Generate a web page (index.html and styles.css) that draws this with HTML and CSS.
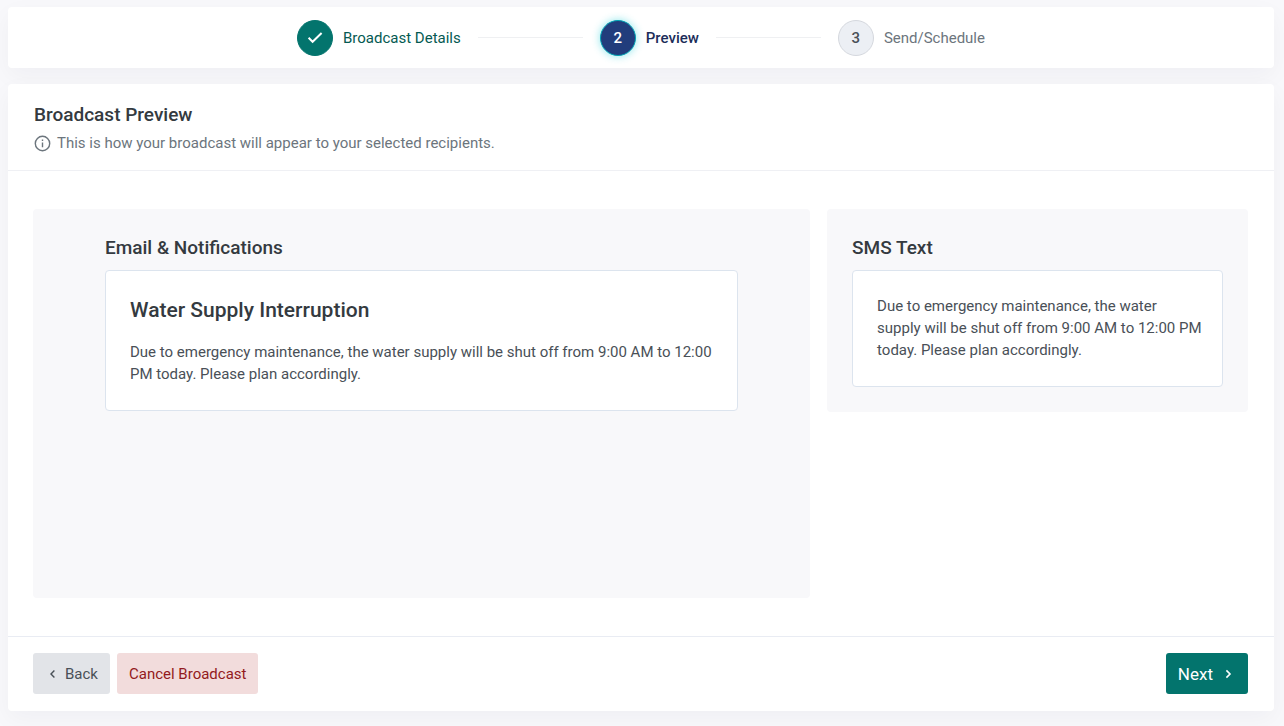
FILE: index.html
```html
<!DOCTYPE html>
<html lang="en">
<head>
    <meta charset="UTF-8">
    <meta name="viewport" content="width=device-width, initial-scale=1.0">
    <title>Broadcast Preview</title>
    <link rel="stylesheet" href="styles.css">
</head>
<body>
    <ol class="card stepper">
        <li class="step step-done">
            <span class="step-circle">
                <svg width="18" height="14" viewBox="0 0 18 14" fill="none" stroke="currentColor" stroke-width="2"><path d="M2.6 6.8l4 4L15.6 2"/></svg>
            </span>
            <span class="step-label">Broadcast Details</span>
        </li>
        <li class="step-line" role="presentation"></li>
        <li class="step step-active" aria-current="step">
            <span class="step-circle">2</span>
            <span class="step-label">Preview</span>
        </li>
        <li class="step-line" role="presentation"></li>
        <li class="step">
            <span class="step-circle">3</span>
            <span class="step-label">Send/Schedule</span>
        </li>
    </ol>

    <main class="card content">
        <header class="content-header">
            <h1>Broadcast Preview</h1>
            <p class="hint">
                <svg width="17" height="17" viewBox="0 0 17 17" fill="none" stroke="currentColor" stroke-width="1.4"><circle cx="8.5" cy="8.5" r="7.2"/><path d="M8.5 7.5v4.7M8.5 4.6v1.5"/></svg>
                <span>This is how your broadcast will appear to your selected recipients.</span>
            </p>
        </header>

        <div class="previews">
            <section class="panel panel-email">
                <h2>Email &amp; Notifications</h2>
                <article class="message">
                    <h3>Water Supply Interruption</h3>
                    <p>Due to emergency maintenance, the water supply will be shut off from 9:00 AM to 12:00 PM today. Please plan accordingly.</p>
                </article>
            </section>
            <section class="panel panel-sms">
                <h2>SMS Text</h2>
                <article class="message">
                    <p>Due to emergency maintenance, the water supply will be shut off from 9:00 AM to 12:00 PM today. Please plan accordingly.</p>
                </article>
            </section>
        </div>

        <footer class="actions">
            <button type="button" class="btn btn-back">
                <svg width="16" height="10" viewBox="0 0 16 10" fill="none" stroke="currentColor" stroke-width="1.4"><path d="M9.4 1.6L6 5l3.4 3.4"/></svg>
                Back
            </button>
            <button type="button" class="btn btn-cancel">Cancel Broadcast</button>
            <button type="button" class="btn btn-next">
                Next
                <svg width="16" height="10" viewBox="0 0 16 10" fill="none" stroke="currentColor" stroke-width="1.6"><path d="M6.4 1.4L10 5l-3.6 3.6"/></svg>
            </button>
        </footer>
    </main>
</body>
</html>
```
FILE: styles.css
```css
* {
    box-sizing: border-box;
}
body {
    font-family: Roboto, "Liberation Sans", sans-serif;
    font-size: 15px;
    line-height: 22px;
    color: #495057;
    background-color: #f8f8fb;
    display: flex;
    flex-direction: column;
    gap: 16px;
    min-height: 100vh;
    margin: 0;
    padding: 7px 10px 15px 8px;
}
h1, h2, h3, p {
    margin: 0;
}
h1, h2, h3 {
    color: #343a40;
    font-weight: 500;
}
h1, h2 {
    font-size: 19px;
    line-height: 24px;
}
.card {
    background-color: #fff;
    border-radius: 4px;
    box-shadow: 0 8px 24px rgba(18,38,63,0.04);
}

/* Stepper */
.stepper {
    display: flex;
    justify-content: center;
    align-items: center;
    gap: 17px;
    height: 61px;
    margin: 0;
    padding: 0 16px;
    list-style: none;
}
.step {
    display: flex;
    align-items: center;
    gap: 10px;
    color: #6c757d;
}
.step-circle {
    display: flex;
    justify-content: center;
    align-items: center;
    width: 36px;
    height: 36px;
    border: 1px solid #d5d8de;
    border-radius: 50%;
    background-color: #eceff4;
    color: #495057;
    font-weight: 500;
}
.step-done {
    color: #055a52;
}
.step-done .step-circle {
    background-color: #03746d;
    border-color: #03746d;
    color: #fff;
}
.step-active {
    color: #1c2d5a;
    font-weight: 500;
}
.step-active .step-circle {
    background-color: #213d7c;
    border-color: #00a3b4;
    color: #fff;
    box-shadow: 0 0 8px rgba(0,200,210,0.45);
}
.step-line {
    flex: 0 1 105px;
    height: 1px;
    background-color: #eff0f2;
}

/* Content */
.content {
    flex: 1;
    display: flex;
    flex-direction: column;
}
.content-header {
    padding: 19px 26px 16px;
    border-bottom: 1px solid #eff0f4;
}
.hint {
    display: flex;
    align-items: center;
    gap: 6px;
    margin-top: 5px;
    color: #6c757d;
}
.previews {
    flex: 1;
    display: grid;
    grid-template-columns: 24fr 13fr;
    gap: 17px;
    padding: 38px 26px 38px 25px;
}
.panel {
    padding: 27px 25px 25px;
    border-radius: 4px;
    background-color: #f8f8fa;
}
.panel-email {
    padding: 27px 72px;
}
.panel-sms {
    align-self: start;
}
.message {
    margin-top: 10px;
    padding: 24px 20px 25px 24px;
    border: 1px solid #dce4ee;
    border-radius: 4px;
    background-color: #fff;
}
.message h3 {
    margin-bottom: 16px;
    font-size: 21px;
    line-height: 30px;
}

/* Footer buttons */
.actions {
    display: flex;
    gap: 7px;
    padding: 16px 26px 17px 25px;
    border-top: 1px solid #e9ecf3;
}
.btn {
    display: flex;
    align-items: center;
    gap: 4px;
    height: 41px;
    padding: 0 12px;
    border: none;
    border-radius: 3px;
    font-family: inherit;
    font-size: 15px;
    cursor: pointer;
}
.btn-back {
    background-color: #e2e4e8;
    color: #495057;
}
.btn-cancel {
    background-color: #f2dcdc;
    color: #931a20;
}
.btn-next {
    gap: 7px;
    margin-left: auto;
    background-color: #03746d;
    color: #fff;
    font-size: 17px;
}
```
